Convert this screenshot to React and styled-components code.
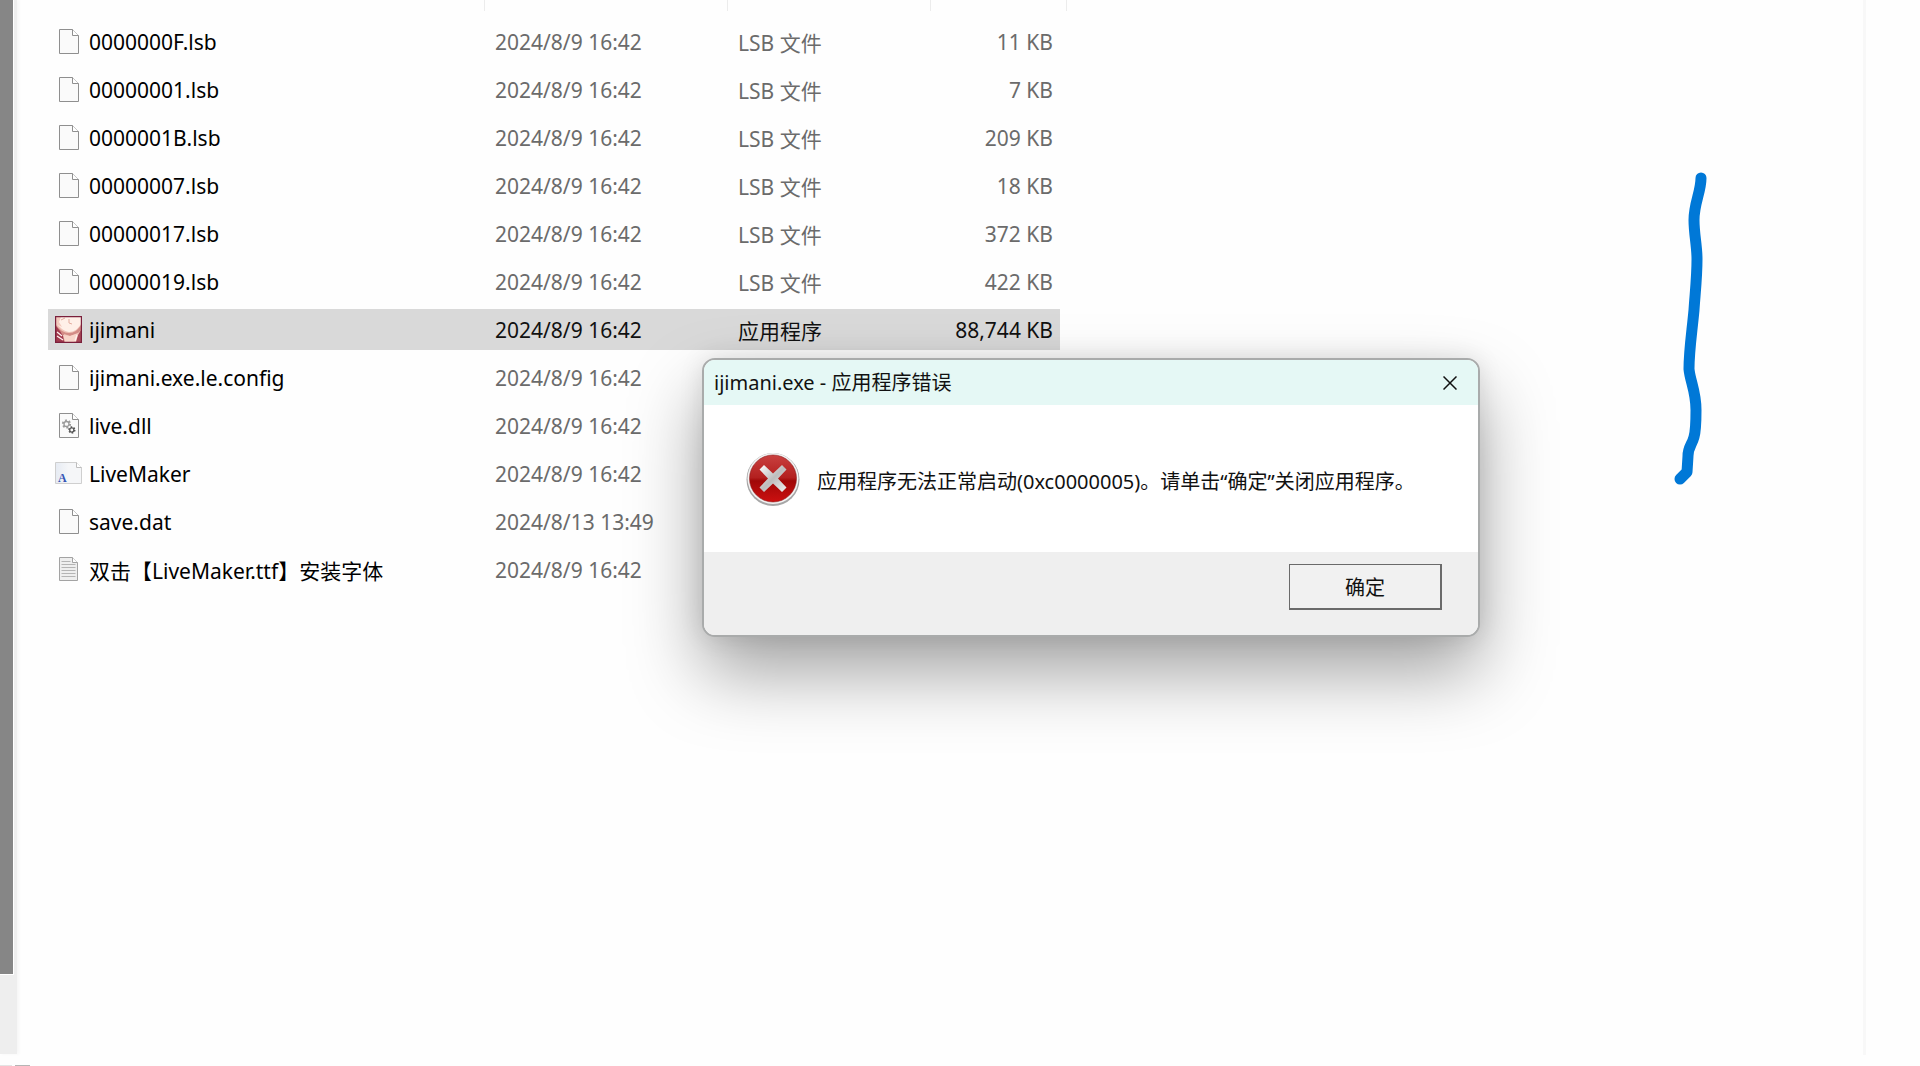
import React, { useState } from "react";
import styled, { createGlobalStyle } from "styled-components";

const PAGE = "#fefefe";
const TEXT = "#111111";
const MUTED = "#6b6b6b";
const SELECTED = "#d9d9d9";

const GlobalStyle = createGlobalStyle`
  * {
    box-sizing: border-box;
  }

  body {
    margin: 0;
    overflow: hidden;
    background: ${PAGE};
    color: ${TEXT};
    font-family: "Noto Sans", "Noto Sans CJK SC", sans-serif;
    font-size: 21px;
  }
`;

const Page = styled.div`
  position: relative;
  display: flex;
  height: 100vh;
`;

const Rail = styled.aside`
  display: flex;
  flex-direction: column;
  width: 22px;
  background: ${PAGE};
`;

const Track = styled.div`
  flex: 1;
  display: flex;
  flex-direction: column;
  width: 17px;
  background: #eeeeee;
  box-shadow: 2px 0 3px #f6f6f6;
`;

const Thumb = styled.div`
  width: 14px;
  height: calc(100% - 79px);
  background: #868686;
  border-right: 1px solid #ffffff;
  border-bottom: 1px solid #ffffff;
`;

const RailFoot = styled.div`
  display: flex;
  align-items: flex-end;
  gap: 3px;
  height: 12px;
`;

const Tick = styled.span`
  flex: none;
  width: ${props => props.width}px;
  height: 1px;
  background: ${props => props.color};
`;

const Files = styled.main`
  flex: 1;
  padding-left: 26px;
`;

const SidePane = styled.aside`
  width: 57px;
  height: calc(100% - 11px);
  border-left: 3px solid #f8f8f8;
`;

const Table = styled.table`
  width: 1019px;
  table-layout: fixed;
  border-collapse: collapse;
`;

const Col = styled.col`
  width: ${props => props.$width}px;
`;

const HeadCell = styled.th`
  height: 18px;
  padding: 0 0 7px;
`;

const HeadEdge = styled.div`
  height: 11px;
  border-right: 1px solid #ececec;
`;

const Cell = styled.td`
  height: 48px;
  padding: 3px ${props => (props.$last ? 7 : 0)}px 4px 0;
`;

const CellBody = styled.div`
  display: flex;
  align-items: center;
  justify-content: ${props => (props.$end ? "flex-end" : "flex-start")};
  height: 41px;
  padding: 0 7px 0 ${props => (props.$name ? 7 : 10)}px;
  gap: 7px;
  white-space: nowrap;
  color: ${props => (props.$dark ? TEXT : MUTED)};
  background: ${props => (props.$selected ? SELECTED : "transparent")};
`;

const Name = styled.span`
  color: #000000;
`;

const Icon = styled.svg`
  flex: none;
  width: 27px;
  height: 27px;
`;

const Dialog = styled.section`
  position: absolute;
  top: 358px;
  left: 702px;
  width: 778px;
  border: 2px solid #a9abab;
  border-radius: 13px;
  overflow: hidden;
  background: #ffffff;
  box-shadow: 0 36px 72px rgba(0, 0, 0, 0.36), 0 0 24px rgba(0, 0, 0, 0.1);
`;

const TitleBar = styled.header`
  display: flex;
  align-items: center;
  justify-content: space-between;
  height: 45px;
  padding-left: 10px;
  background: #e5f8f5;
`;

const Title = styled.h1`
  margin: 0;
  padding-bottom: 2px;
  font-size: 20px;
  font-weight: 400;
`;

const CloseButton = styled.button`
  display: flex;
  align-items: center;
  justify-content: center;
  width: 56px;
  height: 43px;
  padding: 0;
  border: 0;
  background: transparent;
`;

const Message = styled.div`
  display: flex;
  align-items: center;
  gap: 16px;
  height: 147px;
  padding-left: 41px;
`;

const MessageText = styled.p`
  margin: 0;
  padding-top: 4px;
  font-size: 20px;
  white-space: nowrap;
`;

const Actions = styled.footer`
  display: flex;
  align-items: flex-start;
  justify-content: flex-end;
  height: 83px;
  padding: 12px 36px 0 0;
  background: #efefef;
`;

const OkButton = styled.button`
  width: 153px;
  height: 46px;
  padding: 0;
  border: solid #6a6a6a;
  border-width: 1px 2px 2px 1px;
  background: #f1f1f1;
  color: ${TEXT};
  font-family: inherit;
  font-size: 20px;
`;

const Scribble = styled.svg`
  position: absolute;
  top: 160px;
  left: 1660px;
  width: 60px;
  height: 340px;
`;

const Sheet = ({ children }) => (
  <Icon viewBox="0 0 27 27" aria-hidden="true">
    <path d="M4.500 1.500h13l6 6v18h-19z" fill="#fafafa" stroke="#8f8f8f" />
    <path d="M17.500 1.500v6h6" fill="#ffffff" stroke="#8f8f8f" />
    {children}
  </Icon>
);

const GearSheet = () => (
  <Sheet>
    <circle cx="11.5" cy="12" r="3.6" fill="none" stroke="#9b9b9b" strokeWidth="2" strokeDasharray="1.9 1.87" />
    <circle cx="11.5" cy="12" r="2.5" fill="none" stroke="#9b9b9b" strokeWidth="1.3" />
    <circle cx="16.8" cy="18" r="2.9" fill="none" stroke="#555555" strokeWidth="1.6" strokeDasharray="1.5 1.54" />
    <circle cx="16.8" cy="18" r="2.1" fill="none" stroke="#555555" strokeWidth="1.3" />
  </Sheet>
);

const TextSheet = () => (
  <Icon viewBox="0 0 27 27" aria-hidden="true">
    <path d="M4.500 1.500h13l5 5v18h-18z" fill="#eeeeee" stroke="#a3a3a3" />
    <path d="M17.500 1.500v5h5" fill="#ffffff" stroke="#a3a3a3" />
    <path d="M6.500 5.500h9M6.500 8.500h14M6.500 11.500h14M6.500 14.500h14M6.500 17.500h14M6.500 20.500h14" stroke="#b4b4b4" />
  </Icon>
);

const FontSheet = () => (
  <Icon viewBox="0 0 27 27" aria-hidden="true">
    <defs>
      <linearGradient id="fontSheet" x1="0" x2="1">
        <stop offset="0" stopColor="#e6ebf3" />
        <stop offset="0.5" stopColor="#f5f6f8" />
      </linearGradient>
    </defs>
    <path d="M.5 2.500h21l5 5v16H.5z" fill="url(#fontSheet)" stroke="#cfcfcf" />
    <path d="M21.500 2.500v5h5" fill="#ffffff" stroke="#bdbdbd" />
    <text x="3" y="22" fontFamily="Liberation Serif, serif" fontSize="12" fontWeight="700" fill="#3455b5">
      A
    </text>
  </Icon>
);

const GameIcon = () => (
  <Icon viewBox="0 0 27 27" aria-hidden="true">
    <path d="M0 0h27v27H0z" fill="#f0c4b8" />
    <path d="M1 1h25v7c-3 5-7 8-12 8C8 15 4 11 1 6z" fill="#fff0e8" />
    <path d="M1 1h5l-2 5 3 5-6-3z" fill="#f3c9bd" />
    <path d="M1 9c4 5 8 8 13 8 5 0 9-3 12-8v5l-4 4-7 2-6-2 1 8H1z" fill="#d38c86" />
    <path d="M1 10l4 5 3 5 1 6H1z" fill="#a23a4e" />
    <path d="M8 19l7 1 8-3-4 9h-9z" fill="#f8d6ca" />
    <path d="M26 14v12h-5l2-7z" fill="#a94a58" />
    <path d="M2 16l5 4M2 20l6 4M22 19l-2 6" stroke="#fff3f0" strokeWidth="1.300" />
    <path d="M6 4l4-2M14 3v4l3 1" fill="none" stroke="#e3ad9f" />
    <path d="M.5.5h26v26H.5z" fill="none" stroke="#7a1f3b" strokeWidth="1.400" />
  </Icon>
);

const ErrorIcon = styled.svg`
  flex: none;
  width: 56px;
  height: 56px;
`;

const icons = {
  sheet: Sheet,
  gear: GearSheet,
  text: TextSheet,
  font: FontSheet,
  game: GameIcon,
};

const columns = [
  { label: "名称", width: 437 },
  { label: "修改日期", width: 243 },
  { label: "类型", width: 203 },
  { label: "大小", width: 136 },
];

const files = [
  { name: "0000000F.lsb", icon: "sheet", date: "2024/8/9 16:42", type: "LSB 文件", size: "11 KB" },
  { name: "00000001.lsb", icon: "sheet", date: "2024/8/9 16:42", type: "LSB 文件", size: "7 KB" },
  { name: "0000001B.lsb", icon: "sheet", date: "2024/8/9 16:42", type: "LSB 文件", size: "209 KB" },
  { name: "00000007.lsb", icon: "sheet", date: "2024/8/9 16:42", type: "LSB 文件", size: "18 KB" },
  { name: "00000017.lsb", icon: "sheet", date: "2024/8/9 16:42", type: "LSB 文件", size: "372 KB" },
  { name: "00000019.lsb", icon: "sheet", date: "2024/8/9 16:42", type: "LSB 文件", size: "422 KB" },
  { name: "ijimani", icon: "game", date: "2024/8/9 16:42", type: "应用程序", size: "88,744 KB", selected: true },
  { name: "ijimani.exe.le.config", icon: "sheet", date: "2024/8/9 16:42" },
  { name: "live.dll", icon: "gear", date: "2024/8/9 16:42" },
  { name: "LiveMaker", icon: "font", date: "2024/8/9 16:42" },
  { name: "save.dat", icon: "sheet", date: "2024/8/13 13:49" },
  { name: "双击【LiveMaker.ttf】安装字体", icon: "text", date: "2024/8/9 16:42" },
];

const FileRow = ({ file }) => {
  const FileIcon = icons[file.icon];
  const shared = { $selected: file.selected, $dark: file.selected };

  return (
    <tr>
      <Cell>
        <CellBody {...shared} $name>
          <FileIcon />
          <Name>{file.name}</Name>
        </CellBody>
      </Cell>
      <Cell>
        <CellBody {...shared}>{file.date}</CellBody>
      </Cell>
      <Cell>
        <CellBody {...shared}>{file.type}</CellBody>
      </Cell>
      <Cell $last>
        <CellBody {...shared} $end>
          {file.size}
        </CellBody>
      </Cell>
    </tr>
  );
};

const ErrorDialog = ({ onClose }) => (
  <Dialog role="alertdialog" aria-labelledby="error-title" aria-describedby="error-text">
    <TitleBar>
      <Title id="error-title">ijimani.exe - 应用程序错误</Title>
      <CloseButton type="button" aria-label="关闭" onClick={onClose}>
        <svg width="14" height="14" viewBox="0 0 14 14">
          <path d="M.5.5l13 13M13.500.5l-13 13" stroke="#111111" strokeWidth="1.5" />
        </svg>
      </CloseButton>
    </TitleBar>
    <Message>
      <ErrorIcon viewBox="0 0 56 56" aria-hidden="true">
        <defs>
          <linearGradient id="errorFill" x1="0" y1="0" x2="0" y2="1">
            <stop offset="0" stopColor="#c9403f" />
            <stop offset="0.48" stopColor="#b3201f" />
            <stop offset="0.55" stopColor="#a00808" />
            <stop offset="1" stopColor="#cc1010" />
          </linearGradient>
          <linearGradient id="errorCross" x1="0" y1="0" x2="1" y2="1">
            <stop offset="0" stopColor="#ffffff" />
            <stop offset="0.5" stopColor="#bdbdbd" />
            <stop offset="1" stopColor="#f0f0f0" />
          </linearGradient>
        </defs>
        <circle cx="28" cy="28.5" r="26.5" fill="#a6a6a6" />
        <circle cx="28" cy="27.5" r="25.5" fill="#f3f3f3" />
        <circle cx="28" cy="27.5" r="23.5" fill="url(#errorFill)" stroke="#8d1f1f" strokeWidth="0.6" />
        <path
          d="M19 14l9 8.500 9-8.500 4.500 4.500-8.500 9 8.500 9-4.500 4.500-9-8.500-9 8.500-4.500-4.500 8.500-9-8.500-9z"
          fill="url(#errorCross)"
        />
      </ErrorIcon>
      <MessageText id="error-text">
        应用程序无法正常启动(0xc0000005)。请单击“确定”关闭应用程序。
      </MessageText>
    </Message>
    <Actions>
      <OkButton type="button" onClick={onClose}>
        确定
      </OkButton>
    </Actions>
  </Dialog>
);

const App = () => {
  const [showError, setShowError] = useState(true);

  return (
    <Page>
      <GlobalStyle />
      <Rail>
        <Track>
          <Thumb />
        </Track>
        <RailFoot>
          <Tick width={12} color="#e4e4e4" />
          <Tick width={15} color="#b5b5b5" />
        </RailFoot>
      </Rail>
      <Files>
        <Table>
          <colgroup>
            {columns.map(column => (
              <Col key={column.label} $width={column.width} />
            ))}
          </colgroup>
          <thead>
            <tr>
              {columns.map(column => (
                <HeadCell key={column.label} scope="col" aria-label={column.label}>
                  <HeadEdge />
                </HeadCell>
              ))}
            </tr>
          </thead>
          <tbody>
            {files.map(file => (
              <FileRow key={file.name} file={file} />
            ))}
          </tbody>
        </Table>
      </Files>
      <SidePane />
      <Scribble viewBox="0 0 60 340" aria-hidden="true">
        <path
          d="M41 18C41 32 34 43 34 60C34 74 37 86 37 99C37 118 35 134 34 150C32 172 29 190 29 209C30 221 36 231 36 250C36 262 36 270 34 277C32 285 28 287 28 296L27 312L20 319"
          fill="none"
          stroke="#0078d7"
          strokeWidth="11"
          strokeLinecap="round"
          strokeLinejoin="round"
        />
      </Scribble>
      {showError && <ErrorDialog onClose={() => setShowError(false)} />}
    </Page>
  );
};

export default App;
